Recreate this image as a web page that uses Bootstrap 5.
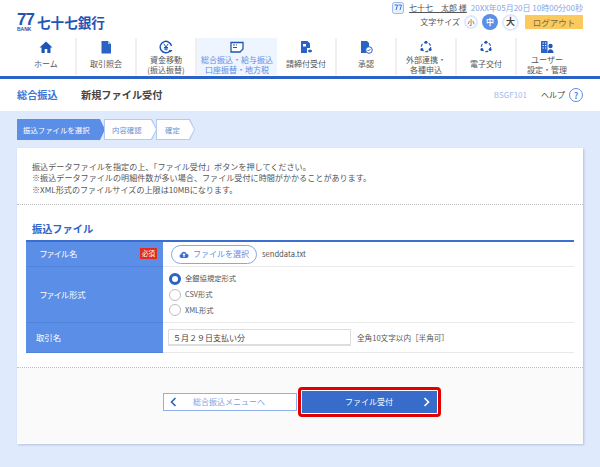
<!DOCTYPE html>
<html lang="ja">
<head>
  <meta charset="UTF-8">
  <title>新規ファイル受付</title>
  <link href="https://cdn.jsdelivr.net/npm/bootstrap@5.3.3/dist/css/bootstrap.min.css" rel="stylesheet">
  <style>
    html, body { height: 467px; overflow: hidden; }
    body { font-family: "Noto Sans CJK JP", "Noto Sans", sans-serif; font-size: 8px; color: #555; background: #fff; }
    a { text-decoration: none; color: inherit; }
    .top-bar { height: 38px; padding: 0 17px; }
    .brand-link { margin-top: 7px; }
    .brand-mark { width: 17px; color: #1f55b5; line-height: 1; }
    .brand-77 { font-size: 17px; font-weight: 700; letter-spacing: -1px; height: 13px; line-height: 13px; display: block; font-family: "Liberation Sans", sans-serif; }
    .brand-bank { font-size: 5px; font-weight: 700; display: block; line-height: 5px; margin-top: 1px; font-family: "Liberation Sans", sans-serif; }
    .brand-name { font-size: 13.6px; font-weight: 700; color: #1f55b5; margin-left: 3px; line-height: 1; }
    .user-line { height: 13px; margin-top: 1px; }
    .user-name { color: #555; text-decoration: underline; font-size: 8px; margin: 0 4px 0 5px; }
    .now-time { color: #84a5e6; font-size: 8px; }
    .size-line { height: 16px; margin-top: 0; }
    .size-label { font-size: 8px; }
    .size-dot { width: 14px; height: 14px; border-radius: 50%; border: 2px solid #e0e9fb; background: #fff; font-size: 7px; color: #444; }
    .size-dot.is-on { width: 16px; height: 16px; background: #5b8ee6; border: 0; color: #fff; font-size: 8px; font-weight: 700; }
    .size-dot.is-big { width: 17px; height: 17px; font-size: 9px; font-weight: 700; }
    .logout-btn { width: 58px; height: 14px; background: #fcc95f; color: #7a6a40; font-size: 8.5px; line-height: 14px; text-align: center; margin-left: 2px; }
    .main-nav { height: 38px; padding-left: 17px; }
    .nav-cell { width: 60px; height: 37px; border-right: 2px solid #efefef; color: #555; font-size: 8px; line-height: 9.5px; text-align: center; padding-top: 2px; }
    .nav-cell:last-child { border-right: 0; }
    .nav-cell.is-wide { width: 80px; background: #eef5fe; color: #5b8ee6; border-right: 0; }
    .nav-cell svg { display: block; flex: none; }
    .nav-label { min-height: 18px; display: flex; align-items: center; justify-content: center; margin-top: 1px; white-space: nowrap; }
    .nav-rule { height: 3px; background: #2a62c5; }
    .title-row { height: 32px; padding: 0 17px; }
    .title-group { color: #3f74d6; font-size: 10.2px; font-weight: 700; width: 64px; }
    .title-page { color: #444; font-size: 10.2px; font-weight: 700; }
    .screen-id { color: #a3bbed; font-size: 8px; margin-right: 14px; }
    .help-text { color: #444; font-size: 8px; margin-right: 4px; }
    .help-mark { width: 14px; height: 14px; border: 1.5px solid #5b8ee6; border-radius: 50%; color: #5b8ee6; font-size: 9px; font-weight: 700; line-height: 1; }
    .page-area { background: #dfeafd; height: 356px; padding: 8px 17px 0; }
    .step-row { height: 21px; margin-bottom: 8px; }
    .step-box { position: relative; height: 21px; background: #b4caf2; clip-path: polygon(0 0, calc(100% - 5px) 0, 100% 50%, calc(100% - 5px) 100%, 0 100%); font-size: 7.4px; color: #6f8fd0; margin-right: -1px; }
    .step-box::before { content: ""; position: absolute; inset: 1px; background: #fff; clip-path: polygon(0 0, calc(100% - 5px) 0, 100% 50%, calc(100% - 5px) 100%, 0 100%); }
    .step-box span { position: relative; }
    .step-box.is-now { background: #5b8ee6; color: #fff; }
    .step-box.is-now::before { background: #5b8ee6; }
    .step-1 { width: 88px; padding-left: 6px; }
    .step-2 { width: 53px; padding-left: 8px; }
    .step-3 { width: 39px; padding-left: 9px; }
    .panel-box { background: #fff; height: 296px; box-shadow: 1px 1px 2px rgba(120,140,180,.45); }
    .note-area { height: 57px; padding: 13px 15px 0; font-size: 8.1px; line-height: 11.3px; color: #555; border-bottom: 1px dotted #bbb; }
    .form-area { height: 163px; padding: 0 9px; border-bottom: 1px dotted #bbb; }
    .form-title { color: #2f64c8; font-size: 10.2px; font-weight: 700; height: 35px; padding: 15px 6px 0; line-height: 17px; }
    .form-grid { border-top: 2px solid #3a6fd0; }
    .form-row { border-bottom: 1px solid #e9e9e9; }
    .form-head { width: 137px; flex: none; background: #5b8ee6; color: #fff; font-size: 8.4px; padding-left: 14px; border-bottom: 1px solid #5283dc; margin-bottom: -1px; font-feature-settings: "palt"; }
    .form-head.is-short { padding-left: 10px; }
    .form-row:nth-child(1) { height: 25px; }
    .form-row:nth-child(1) .form-head { padding-bottom: 1px; }
    .form-row:nth-child(2) { height: 56px; }
    .form-row:nth-child(3) { height: 30px; }
    .must-tag { background: #e02b20; color: #fff; font-size: 6.5px; padding: 1px 2px; margin-left: auto; margin-right: 6px; line-height: 9px; }
    .form-cell { padding-left: 8px; font-size: 7.6px; color: #555; }
    .file-btn { width: 86px; height: 19px; border: 1px solid #86a9ea; border-radius: 10px; color: #5b8ee6; font-size: 8px; margin-right: 5px; background: #fff; }
    .radio-col { padding-left: 6px; }
    .radio-line { height: 15.7px; gap: 4px; font-size: 7.3px; }
    .radio-dot { width: 12px; height: 12px; border-radius: 50%; border: 1.5px solid #bdbdbd; background: #fff; flex: none; }
    .radio-dot.is-on { border: 3.5px solid #2a62c5; }
    .name-input { width: 183px; height: 17px; border: 1px solid #ddd; border-bottom-width: 2px; border-radius: 1px; padding-left: 4px; font-size: 8px; color: #444; margin-left: -3px; margin-right: 6px; background: #fff; font-family: inherit; }
    .foot-area { background: #fafafa; height: 75px; padding: 19px 0 0 3px; }
    .back-btn { width: 134px; height: 18px; margin-top: 6px; border: 1px solid #8fb0ec; background: #fff; color: #7f9fdf; font-size: 8px; padding-left: 6px; margin-right: 1px; }
    .back-btn span { flex: 1; text-align: center; padding-right: 14px; }
    .go-ring { width: 143px; height: 30px; border: 3px solid #e00000; border-radius: 4px; padding: 1px; background: #fff; }
    .go-btn { height: 100%; background: #376ccb; color: #fff; font-size: 8px; padding: 0 7px 0 0; }
    .go-btn span { flex: 1; text-align: center; padding-left: 14px; }
  </style>
</head>
<body>
  <div class="top-bar d-flex justify-content-between">
    <a href="#" class="brand-link d-flex align-items-center">
      <span class="brand-mark"><span class="brand-77">77</span><span class="brand-bank">BANK</span></span>
      <span class="brand-name">七十七銀行</span>
    </a>
    <div class="d-flex flex-column align-items-end">
      <div class="user-line d-flex align-items-center">
        <svg width="12" height="12" viewBox="0 0 12 12"><rect x=".5" y=".5" width="11" height="11" rx="2" fill="#e9f0fd" stroke="#9db8ec"/><path d="M2.500 3h3L4 8M6.500 3h3L8 8" fill="none" stroke="#3f74d6"/></svg>
        <a href="#" class="user-name">七十七　太郎 様</a>
        <span class="now-time">20XX年05月20日 10時00分00秒</span>
      </div>
      <div class="size-line d-flex align-items-center gap-1">
        <span class="size-label">文字サイズ</span>
        <span class="size-dot d-flex align-items-center justify-content-center">小</span>
        <span class="size-dot is-on d-flex align-items-center justify-content-center">中</span>
        <span class="size-dot is-big d-flex align-items-center justify-content-center">大</span>
        <a href="#" class="logout-btn">ログアウト</a>
      </div>
    </div>
  </div>

  <nav class="main-nav d-flex">
    <a href="#" class="nav-cell d-flex flex-column align-items-center">
      <svg width="14" height="14" viewBox="0 0 14 14"><path d="M7 1.500 0.500 7.500h2V13h3.200V9h2.600v4h3.200V7.500h2z" fill="#1f55b5"/></svg>
      <span class="nav-label">ホーム</span>
    </a>
    <a href="#" class="nav-cell d-flex flex-column align-items-center">
      <svg width="14" height="14" viewBox="0 0 14 14"><path d="M2.500 1H9l3 3v9.500H2.500z" fill="#2a62c5"/><path d="M9 1v3h3z" fill="#a9c3f0"/></svg>
      <span class="nav-label">取引照会</span>
    </a>
    <a href="#" class="nav-cell d-flex flex-column align-items-center">
      <svg width="14" height="14" viewBox="0 0 14 14"><path d="M11 11A5.700 5.700 0 1 1 12.500 6" fill="none" stroke="#1f55b5" stroke-width="1.400"/><path d="M4.800 3.800 7 7l2.200-3.200M7 7v3.500M5 7.500h4M5 9h4" fill="none" stroke="#1f55b5"/><path d="M9.500 10h4l-2 2.500z" fill="#1f55b5"/></svg>
      <span class="nav-label">資金移動<br>(振込振替)</span>
    </a>
    <a href="#" class="nav-cell is-wide d-flex flex-column align-items-center">
      <svg width="14" height="14" viewBox="0 0 14 14"><path d="M1 2.500h12v6.500l-3 3H1z" fill="#fff" stroke="#1f55b5" stroke-width="1.300"/><path d="M3 5h2M6 5h1M3 7.500h4" stroke="#1f55b5"/></svg>
      <span class="nav-label">総合振込・給与振込<br>口座振替・地方税</span>
    </a>
    <a href="#" class="nav-cell d-flex flex-column align-items-center">
      <svg width="14" height="14" viewBox="0 0 14 14"><path d="M2 1h6.500L11 3.500V8H8v5H2z" fill="#2a62c5"/><path d="M4 4h3v2.500H4z" fill="#fff"/><path d="M9 11h4M11 9.500v3" stroke="#1f55b5" stroke-width="1.300"/></svg>
      <span class="nav-label">請締付受付</span>
    </a>
    <a href="#" class="nav-cell d-flex flex-column align-items-center">
      <svg width="14" height="14" viewBox="0 0 14 14"><path d="M2 1h6L10 3v3.500L7 9v4H2z" fill="#2a62c5"/><circle cx="10" cy="10" r="3.300" fill="#fff" stroke="#2a62c5"/><path d="M8.500 10l1 1 2-2" fill="none" stroke="#2a62c5" stroke-width=".9"/></svg>
      <span class="nav-label">承認</span>
    </a>
    <a href="#" class="nav-cell d-flex flex-column align-items-center">
      <svg width="14" height="14" viewBox="0 0 14 14"><circle cx="7" cy="7" r="4.700" fill="none" stroke="#2a62c5" stroke-width="1.200" stroke-dasharray="3 1.900"/><circle cx="7" cy="2.300" r="1.500" fill="#1f55b5"/><circle cx="2.900" cy="9.500" r="1.500" fill="#1f55b5"/><circle cx="11.100" cy="9.500" r="1.500" fill="#1f55b5"/></svg>
      <span class="nav-label">外部連携・<br>各種申込</span>
    </a>
    <a href="#" class="nav-cell d-flex flex-column align-items-center">
      <svg width="14" height="14" viewBox="0 0 14 14"><circle cx="7" cy="7" r="4.700" fill="none" stroke="#2a62c5" stroke-width="1.200" stroke-dasharray="3 1.900"/><circle cx="7" cy="2.300" r="1.500" fill="#1f55b5"/><circle cx="2.900" cy="9.500" r="1.500" fill="#1f55b5"/><circle cx="11.100" cy="9.500" r="1.500" fill="#1f55b5"/></svg>
      <span class="nav-label">電子交付</span>
    </a>
    <a href="#" class="nav-cell d-flex flex-column align-items-center">
      <svg width="14" height="14" viewBox="0 0 14 14"><path d="M1 1h6.500v12H1z" fill="#2a62c5"/><path d="M2.500 3h1.300M5 3h1.300M2.500 5.500h1.300M5 5.500h1.300M2.500 8h1.300M5 8h1.300" stroke="#fff"/><circle cx="10.500" cy="6" r="2.200" fill="#1f55b5"/><path d="M7.500 13c0-5 6-5 6 0z" fill="#1f55b5"/></svg>
      <span class="nav-label">ユーザー<br>設定・管理</span>
    </a>
  </nav>
  <div class="nav-rule"></div>

  <div class="title-row d-flex align-items-center">
    <span class="title-group">総合振込</span>
    <span class="title-page">新規ファイル受付</span>
    <span class="screen-id ms-auto">BSGF101</span>
    <span class="help-text">ヘルプ</span>
    <span class="help-mark d-flex align-items-center justify-content-center">?</span>
  </div>

  <main class="page-area">
    <div class="step-row d-flex">
      <div class="step-box step-1 is-now d-flex align-items-center"><span>振込ファイルを選択</span></div>
      <div class="step-box step-2 d-flex align-items-center"><span>内容確認</span></div>
      <div class="step-box step-3 d-flex align-items-center"><span>確定</span></div>
    </div>

    <div class="panel-box">
      <div class="note-area">
        振込データファイルを指定の上、「ファイル受付」ボタンを押してください。<br>
        ※振込データファイルの明細件数が多い場合、ファイル受付に時間がかかることがあります。<br>
        ※XML形式のファイルサイズの上限は10MBになります。
      </div>
      <div class="form-area">
        <div class="form-title">振込ファイル</div>
        <div class="form-grid">
          <div class="form-row d-flex">
            <div class="form-head d-flex align-items-center">ファイル名<span class="must-tag">必須</span></div>
            <div class="form-cell d-flex align-items-center">
              <a href="#" class="file-btn d-flex align-items-center justify-content-center gap-1">
                <svg width="10" height="8" viewBox="0 0 10 8"><path d="M2.500 8C0 8 0 4.500 2 4.300 2.500 1 7 1 7.500 3.800 10.500 4 10 8 7.500 8z" fill="#3a6fd0"/><path d="M5 3 3.300 5h1.100v2h1.200V5h1.100z" fill="#fff"/></svg>
                ファイルを選択
              </a>
              senddata.txt
            </div>
          </div>
          <div class="form-row d-flex">
            <div class="form-head d-flex align-items-center">ファイル形式</div>
            <div class="form-cell radio-col d-flex flex-column justify-content-center">
              <div class="radio-line d-flex align-items-center"><span class="radio-dot is-on"></span>全銀協規定形式</div>
              <div class="radio-line d-flex align-items-center"><span class="radio-dot"></span>CSV形式</div>
              <div class="radio-line d-flex align-items-center"><span class="radio-dot"></span>XML形式</div>
            </div>
          </div>
          <div class="form-row d-flex">
            <div class="form-head is-short d-flex align-items-center">取引名</div>
            <div class="form-cell d-flex align-items-center">
              <input class="name-input" type="text" value="５月２９日支払い分">
              全角10文字以内［半角可］
            </div>
          </div>
        </div>
      </div>
      <div class="foot-area d-flex justify-content-center">
        <a href="#" class="back-btn d-flex align-items-center">
          <svg width="7" height="10" viewBox="0 0 7 10"><path d="M5.500 1 1.500 5l4 4" fill="none" stroke="#2a62c5" stroke-width="1.600"/></svg>
          <span>総合振込メニューへ</span>
        </a>
        <div class="go-ring">
          <a href="#" class="go-btn d-flex align-items-center">
            <span>ファイル受付</span>
            <svg width="7" height="10" viewBox="0 0 7 10"><path d="M1.500 1l4 4-4 4" fill="none" stroke="#fff" stroke-width="1.600"/></svg>
          </a>
        </div>
      </div>
    </div>
  </main>
  <script src="https://cdn.jsdelivr.net/npm/bootstrap@5.3.3/dist/js/bootstrap.bundle.min.js"></script>
</body>
</html>
